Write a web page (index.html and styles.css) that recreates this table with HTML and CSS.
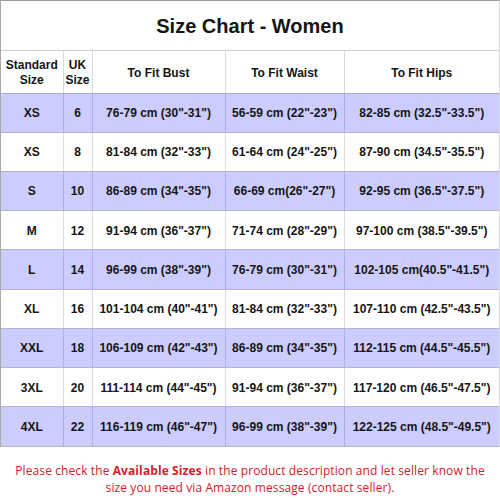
FILE: index.html
```html
<!DOCTYPE html>
<html>
<head>
<meta charset="utf-8">
<link rel="stylesheet" href="styles.css">
</head>
<body>
<div class="chart">
  <div class="title">Size Chart - Women</div>
  <table class="sizes">
    <colgroup>
      <col class="c1"><col class="c2"><col class="c3"><col class="c4"><col class="c5">
    </colgroup>
    <thead>
      <tr><th>Standard<br>Size</th><th>UK<br>Size</th><th>To Fit Bust</th><th>To Fit Waist</th><th>To Fit Hips</th></tr>
    </thead>
    <tbody>
      <tr class="alt first"><td>XS</td><td>6</td><td>76-79 cm (30"-31")</td><td>56-59 cm (22"-23")</td><td>82-85 cm (32.5"-33.5")</td></tr>
      <tr><td>XS</td><td>8</td><td>81-84 cm (32"-33")</td><td>61-64 cm (24"-25")</td><td>87-90 cm (34.5"-35.5")</td></tr>
      <tr class="alt"><td>S</td><td>10</td><td>86-89 cm (34"-35")</td><td>66-69 cm(26"-27")</td><td>92-95 cm (36.5"-37.5")</td></tr>
      <tr><td>M</td><td>12</td><td>91-94 cm (36"-37")</td><td>71-74 cm (28"-29")</td><td>97-100 cm (38.5"-39.5")</td></tr>
      <tr class="alt"><td>L</td><td>14</td><td>96-99 cm (38"-39")</td><td>76-79 cm (30"-31")</td><td>102-105 cm(40.5"-41.5")</td></tr>
      <tr><td>XL</td><td>16</td><td>101-104 cm (40"-41")</td><td>81-84 cm (32"-33")</td><td>107-110 cm (42.5"-43.5")</td></tr>
      <tr class="alt"><td>XXL</td><td>18</td><td>106-109 cm (42"-43")</td><td>86-89 cm (34"-35")</td><td>112-115 cm (44.5"-45.5")</td></tr>
      <tr><td>3XL</td><td>20</td><td>111-114 cm (44"-45")</td><td>91-94 cm (36"-37")</td><td>117-120 cm (46.5"-47.5")</td></tr>
      <tr class="alt"><td>4XL</td><td>22</td><td>116-119 cm (46"-47")</td><td>96-99 cm (38"-39")</td><td>122-125 cm (48.5"-49.5")</td></tr>
    </tbody>
  </table>
</div>
<p class="note">Please check the <b>Available Sizes</b> in the product description and let seller know the<br>size you need via Amazon message (contact seller).</p>
</body>
</html>
```
FILE: styles.css
```css
html, body {
  margin: 0;
  padding: 0;
  background: #fff;
}
body {
  width: 500px;
  height: 500px;
  overflow: hidden;
  font-family: "Liberation Sans", Arial, sans-serif;
  color: #151515;
}
.chart {
  box-sizing: border-box;
  width: 500px;
  border-top: 1px solid #9a9a9a;
  border-left: 1px solid #a8a8a8;
  border-right: 1px solid #d8d8d8;
}
.title {
  height: 50px;
  box-sizing: border-box;
  padding-top: 2px;
  border-bottom: 1px solid #cfcfcf;
  font-size: 20px;
  font-weight: bold;
  text-align: center;
  line-height: 47px;
}
.sizes {
  border-collapse: collapse;
  table-layout: fixed;
  width: 498px;
  font-size: 12px;
  font-weight: bold;
  text-align: center;
}
.c1 { width: 62px; }
.c2 { width: 29px; }
.c3 { width: 133px; }
.c4 { width: 119px; }
.c5 { width: 155px; }
.sizes th {
  height: 42px;
  padding: 3px 0 0;
  line-height: 15px;
  border-left: 1px solid #dadada;
  border-bottom: 1px solid #a8a8c8;
  box-sizing: border-box;
}
.sizes th:first-child { border-left: none; }
.sizes td {
  height: 39.25px;
  padding: 1px 0 0;
  border-left: 1px solid #dcdce8;
  border-bottom: 1px solid #b4b4d2;
  box-sizing: border-box;
}
.sizes tr.first td { height: 39px; }
.sizes td:first-child { border-left: none; }
.sizes tr.alt td {
  background: #ccccff;
  border-left-color: #b0b0dc;
}
.sizes tr.alt td:first-child { border-left: none; }
.note {
  margin: 15px 0 0;
  font-family: "Open Sans", sans-serif;
  font-size: 12px;
  letter-spacing: 0.1px;
  line-height: 17px;
  color: #d4202a;
  text-align: center;
}
.note b { font-weight: bold; }
```
